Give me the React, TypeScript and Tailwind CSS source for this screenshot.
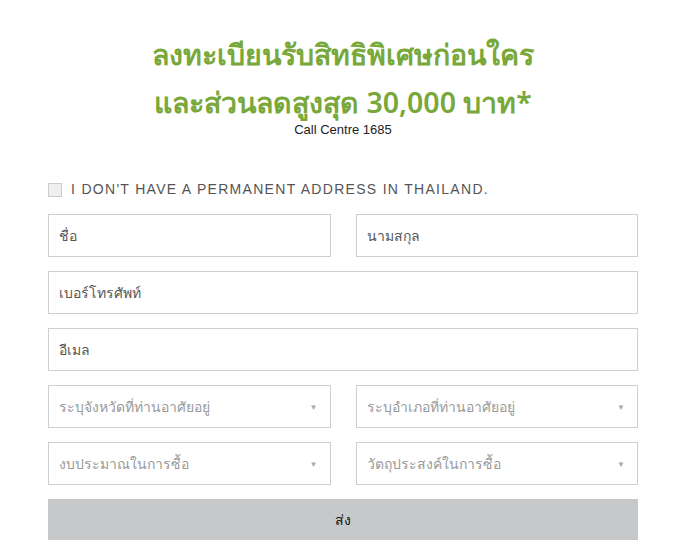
import React from 'react';

const Field: React.FC<{ placeholder: string; light?: boolean; select?: boolean }> = ({ placeholder, light, select }) => (
  <div className="h-[43px] border border-[#cfcfcf] bg-white flex items-center px-[10px] justify-between">
    <span className={`text-[14px] ${light ? 'text-[#9a9a9a]' : 'text-[#555]'}`}>{placeholder}</span>
    {select && <span className="text-[8px] text-[#aaa] mr-[2px]">▼</span>}
  </div>
);

export default function App() {
  return (
    <div className="w-[680px] h-[559px] bg-white overflow-hidden" style={{ fontFamily: '"Noto Sans", "Liberation Sans", sans-serif' }}>
      <div className="ml-[48px] w-[590px] pt-[30px]">
        <div className="text-center text-[#78a83a] text-[28.5px] font-semibold leading-[48px]">
          <div>ลงทะเบียนรับสิทธิพิเศษก่อนใคร</div>
          <div>และส่วนลดสูงสุด 30,000 บาท*</div>
        </div>
        <div className="text-center text-[13px] text-[#222] leading-[16px] -mt-[4px]" style={{ fontFamily: '"Liberation Sans", Arial, sans-serif' }}>
          Call Centre 1685
        </div>

        <div className="flex items-center gap-[9px] mt-[41px]">
          <div className="w-[14px] h-[14px] border border-[#ccc] bg-[#efefef]"></div>
          <span className="text-[14px] text-[#555] tracking-[1.3px] uppercase" style={{ fontFamily: '"Liberation Sans", Arial, sans-serif' }}>
            I don't have a permanent address in Thailand.
          </span>
        </div>

        <div className="flex flex-col gap-[14px] mt-[14px]">
          <div className="grid grid-cols-2 gap-[25px]">
            <Field placeholder="ชื่อ" />
            <Field placeholder="นามสกุล" />
          </div>
          <Field placeholder="เบอร์โทรศัพท์" />
          <Field placeholder="อีเมล" />
          <div className="grid grid-cols-2 gap-[25px]">
            <Field placeholder="ระบุจังหวัดที่ท่านอาศัยอยู่" light select />
            <Field placeholder="ระบุอำเภอที่ท่านอาศัยอยู่" light select />
          </div>
          <div className="grid grid-cols-2 gap-[25px]">
            <Field placeholder="งบประมาณในการซื้อ" light select />
            <Field placeholder="วัตถุประสงค์ในการซื้อ" light select />
          </div>
          <div className="h-[41px] bg-[#c7c8ca] flex items-center justify-center text-[14px] text-[#111]">ส่ง</div>
        </div>
      </div>
    </div>
  );
}
